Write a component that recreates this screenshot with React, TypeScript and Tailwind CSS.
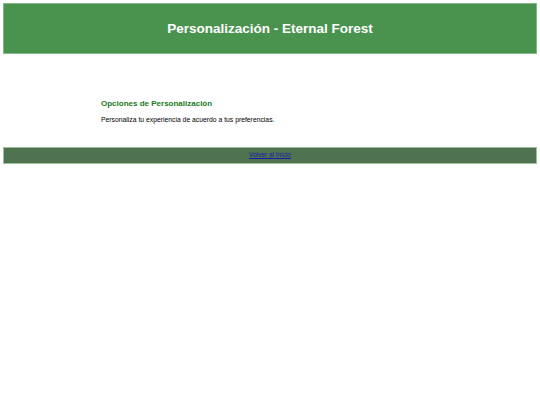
export default function App() {
  return (
    <div className="p-[3px] bg-white min-h-[405px]" style={{ fontFamily: '"Liberation Sans", Arial, sans-serif' }}>
      <header className="h-[51px] flex items-center justify-center bg-[#4a934f] border border-[#86b989]">
        <h1 className="text-[13.5px] font-bold text-white leading-none">Personalización - Eternal Forest</h1>
      </header>
      <main className="pl-[98px] pt-[45px] pb-[23px]">
        <h2 className="text-[8px] font-bold text-[#207a20] leading-[10px]">Opciones de Personalización</h2>
        <p className="text-[6.8px] text-black leading-[8px] mt-[7px]">Personaliza tu experiencia de acuerdo a tus preferencias.</p>
      </main>
      <footer className="h-[17px] flex items-center justify-center bg-[#4f7350] border border-[#9cc09c]">
        <a href="#" className="text-[6.5px] text-[#1a1aa6] underline leading-none">Volver al Inicio</a>
      </footer>
    </div>
  );
}
